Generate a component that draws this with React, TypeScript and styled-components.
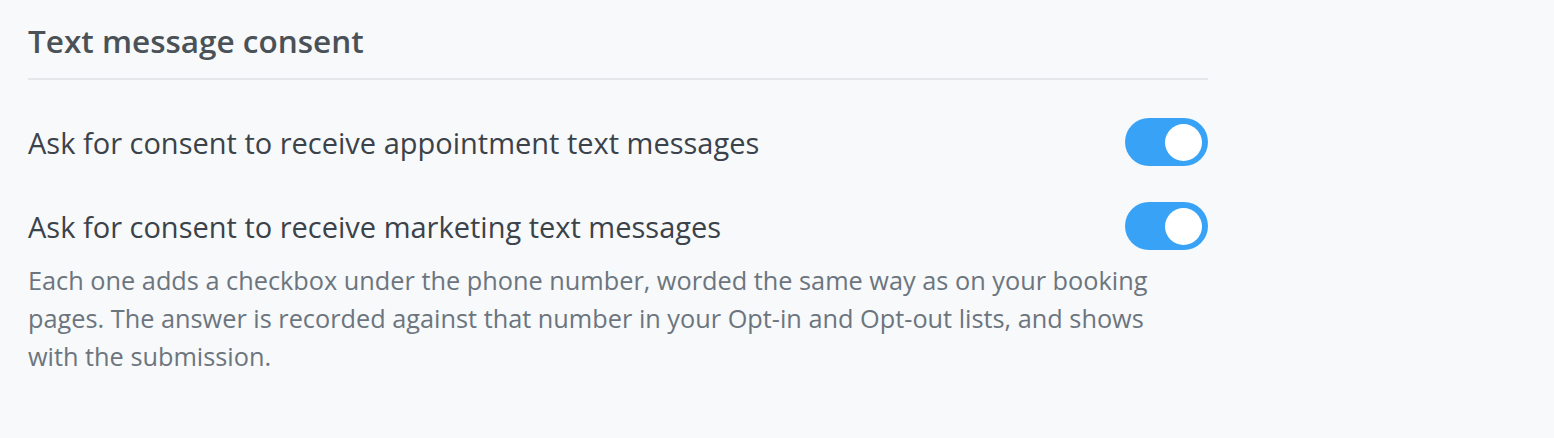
import React, { useState } from 'react'
import styled, { createGlobalStyle } from 'styled-components'

const GlobalStyle = createGlobalStyle`
  html, body { margin: 0; padding: 0; background: #f7f9fb; }
  body { font-family: "Open Sans", "Liberation Sans", sans-serif; -webkit-font-smoothing: antialiased; }
`

const Page = styled.div`
  min-height: 438px;
  background: #f7f9fb;
  padding: 19px 0 0 28px;
  box-sizing: border-box;
`

const Section = styled.section`
  width: 1180px;
`

const Heading = styled.h2`
  margin: 0;
  font-size: 31.5px;
  line-height: 44px;
  font-weight: 600;
  color: #4a5157;
  padding-bottom: 15px;
  border-bottom: 2px solid #e5e8eb;
`

const Row = styled.div`
  display: flex;
  align-items: center;
  justify-content: space-between;
  height: 84px;
  &:first-of-type { margin-top: 20px; }
`

const Label = styled.span`
  font-size: 29px;
  color: #3b4249;
`

const Track = styled.button<{ $on: boolean }>`
  position: relative;
  width: 83px;
  height: 48px;
  border: none;
  border-radius: 24px;
  padding: 0;
  cursor: pointer;
  background: ${(p) => (p.$on ? '#38a3f6' : '#cfd6dd')};
  transition: background 0.2s;
`

const Knob = styled.span<{ $on: boolean }>`
  position: absolute;
  top: 5.5px;
  left: ${(p) => (p.$on ? '40px' : '6px')};
  width: 37px;
  height: 37px;
  border-radius: 50%;
  background: #ffffff;
  transition: left 0.2s;
`

const Hint = styled.p`
  margin: -7px 0 0;
  width: 1150px;
  font-size: 25.3px;
  line-height: 38px;
  color: #6c757e;
`

function Toggle({ on, onClick }: { on: boolean; onClick: () => void }) {
  return (
    <Track $on={on} onClick={onClick} role="switch" aria-checked={on}>
      <Knob $on={on} />
    </Track>
  )
}

export default function App() {
  const [appt, setAppt] = useState(true)
  const [marketing, setMarketing] = useState(true)
  return (
    <Page>
      <GlobalStyle />
      <Section>
        <Heading>Text message consent</Heading>
        <div>
          <Row>
            <Label>Ask for consent to receive appointment text messages</Label>
            <Toggle on={appt} onClick={() => setAppt(!appt)} />
          </Row>
          <Row>
            <Label>Ask for consent to receive marketing text messages</Label>
            <Toggle on={marketing} onClick={() => setMarketing(!marketing)} />
          </Row>
        </div>
        <Hint>
          Each one adds a checkbox under the phone number, worded the same way as on your booking
          pages. The answer is recorded against that number in your Opt-in and Opt-out lists, and
          shows with the submission.
        </Hint>
      </Section>
    </Page>
  )
}
